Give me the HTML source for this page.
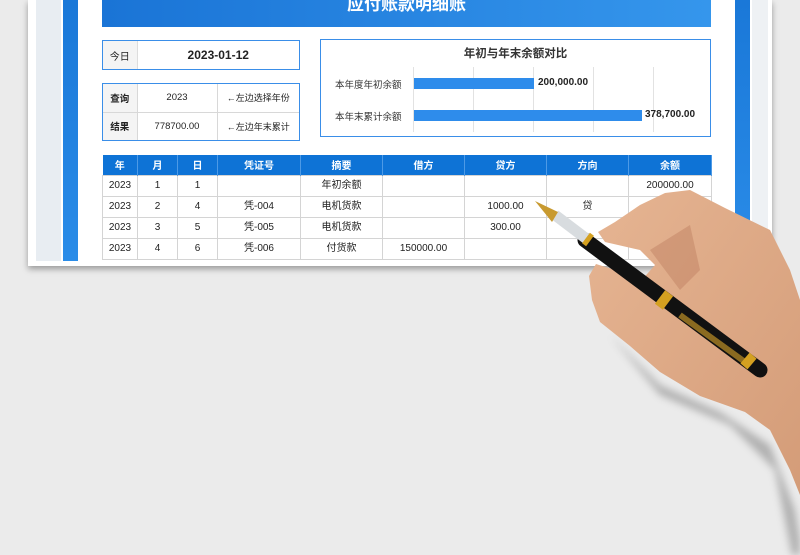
<!DOCTYPE html>
<html><head><meta charset="utf-8"><style>
*{margin:0;padding:0;box-sizing:border-box}
body{width:800px;height:555px;overflow:hidden;background:#ebebeb;font-family:"Liberation Sans","Noto Sans CJK SC",sans-serif;position:relative}
.paper{position:absolute;left:28px;top:0;width:744px;height:266px;background:#fff;box-shadow:0 3px 6px rgba(0,0,0,.35)}
.side{position:absolute;left:36px;top:0;width:25px;height:261px;background:#e8edf2}
.side2{position:absolute;left:752px;top:0;width:16px;height:261px;background:#eef1f4}
.bar{position:absolute;top:0;height:261px;width:15px;background:linear-gradient(#1a78d8,#2a8ce8)}
.title{position:absolute;left:102px;top:0;width:609px;height:27px;background:linear-gradient(90deg,#1a74d6,#3596ec);color:#fff;font-weight:bold;font-size:17px;text-align:center;line-height:10px;overflow:hidden}
.box{position:absolute;border:1.5px solid #3a8ee8;background:#fff;font-size:10px;color:#222}
table{border-collapse:collapse}
.t td{border:1px solid #d8d8d8;text-align:center}
.g{position:absolute;left:102px;top:155px;font-size:10px;color:#222}
.g th{background:#0e73d6;color:#fff;font-weight:bold;height:20px;border-right:1px solid #4d9ae6}
.g td{height:21px;border:1px solid #d4d4d4;text-align:center;line-height:12px}
</style></head><body>
<div class="paper"></div>
<div class="side"></div><div class="side2"></div>
<div class="bar" style="left:63px"></div>
<div class="bar" style="left:735px"></div>
<div class="title">应付账款明细账</div>
<div class="box" style="left:102px;top:40px;width:198px;height:30px">
<table class="t" style="width:100%;height:100%"><tr><td style="width:34px;background:#f4f4f4;border:none;border-right:1px solid #ddd">今日</td><td style="font-weight:bold;font-size:12px;border:none">2023-01-12</td></tr></table></div>
<div class="box" style="left:102px;top:83px;width:198px;height:58px">
<table class="t" style="width:100%;height:100%;font-size:9.5px"><tr><td style="width:34px;background:#f4f4f4;font-weight:bold;border-left:none;border-top:none">查询</td><td style="width:80px;border-top:none">2023</td><td style="border-top:none;border-right:none;font-size:9px">←左边选择年份</td></tr>
<tr><td style="background:#f4f4f4;font-weight:bold;border-left:none;border-bottom:none">结果</td><td style="border-bottom:none">778700.00</td><td style="border-bottom:none;border-right:none;font-size:9px">←左边年末累计</td></tr></table></div>
<div class="box" style="left:320px;top:39px;width:391px;height:98px">
<div style="text-align:center;font-weight:bold;font-size:11.5px;margin-top:5px;color:#333">年初与年末余额对比</div>
<div style="position:absolute;left:92px;top:27px;width:1px;height:65px;background:#e2e2e2"></div>
<div style="position:absolute;left:152px;top:27px;width:1px;height:65px;background:#e2e2e2"></div>
<div style="position:absolute;left:212px;top:27px;width:1px;height:65px;background:#e2e2e2"></div>
<div style="position:absolute;left:272px;top:27px;width:1px;height:65px;background:#e2e2e2"></div>
<div style="position:absolute;left:332px;top:27px;width:1px;height:65px;background:#e2e2e2"></div>
<div style="position:absolute;left:14px;top:37px;font-size:9.5px;color:#333">本年度年初余额</div>
<div style="position:absolute;left:93px;top:38px;width:120px;height:11px;background:#2e8ceb"></div>
<div style="position:absolute;left:217px;top:37px;font-size:10px;font-weight:bold">200,000.00</div>
<div style="position:absolute;left:14px;top:69px;font-size:9.5px;color:#333">本年末累计余额</div>
<div style="position:absolute;left:93px;top:70px;width:228px;height:11px;background:#2e8ceb"></div>
<div style="position:absolute;left:324px;top:69px;font-size:10px;font-weight:bold">378,700.00</div>
</div>
<table class="g">
<tr><th style="width:35px">年</th><th style="width:40px">月</th><th style="width:40px">日</th><th style="width:83px">凭证号</th><th style="width:82px">摘要</th><th style="width:82px">借方</th><th style="width:82px">贷方</th><th style="width:82px">方向</th><th style="width:83px">余额</th></tr>
<tr><td>2023</td><td>1</td><td>1</td><td></td><td>年初余额</td><td></td><td></td><td></td><td>200000.00</td></tr>
<tr><td>2023</td><td>2</td><td>4</td><td>凭-004</td><td>电机货款</td><td></td><td>1000.00</td><td>贷</td><td></td></tr>
<tr><td>2023</td><td>3</td><td>5</td><td>凭-005</td><td>电机货款</td><td></td><td>300.00</td><td></td><td></td></tr>
<tr><td>2023</td><td>4</td><td>6</td><td>凭-006</td><td>付货款</td><td>150000.00</td><td></td><td></td><td></td></tr>
</table>
<div style="position:absolute;left:28px;top:261px;width:744px;height:5px;background:#fff"></div>
<svg style="position:absolute;left:0;top:0" width="800" height="555">
<defs><linearGradient id="sk" x1="0" y1="0" x2="1" y2="1"><stop offset="0" stop-color="#e6b593"/><stop offset="1" stop-color="#d49c78"/></linearGradient>
<filter id="sh"><feGaussianBlur stdDeviation="4"/></filter></defs>
<path d="M610 335 L660 385 L720 412 L770 445 L795 510 L800 540 L800 555 L792 555 L775 470 L730 425 L660 395 Z" fill="#444" opacity=".35" filter="url(#sh)"/>
<path d="M598 232 L615 222 L640 205 L665 193 L690 190 L725 208 L770 230 L790 270 L800 300 L800 495 L790 470 L770 430 L745 412 L700 396 L660 372 L630 346 L600 322 L592 300 L589 276 L596 264 L615 270 L640 282 L655 265 L640 250 L605 242 Z" fill="url(#sk)"/>
<path d="M650 250 L690 225 L700 270 L680 290 Z" fill="#b9785a" opacity=".4"/>
<line x1="585" y1="240" x2="760" y2="370" stroke="#111" stroke-width="15" stroke-linecap="round"/>
<line x1="660" y1="297" x2="668" y2="303" stroke="#d4a020" stroke-width="17"/>
<line x1="680" y1="315" x2="745" y2="362" stroke="#8a6a20" stroke-width="6"/>
<line x1="745" y1="358" x2="752" y2="364" stroke="#d4a020" stroke-width="14"/>
<line x1="555" y1="215" x2="588" y2="240" stroke="#d8dcdf" stroke-width="11"/>
<line x1="586" y1="238" x2="590" y2="241" stroke="#d4a020" stroke-width="13"/>
<path d="M535 201 L558 212 L552 222 Z" fill="#c89a30"/>
</svg>
</body></html>
